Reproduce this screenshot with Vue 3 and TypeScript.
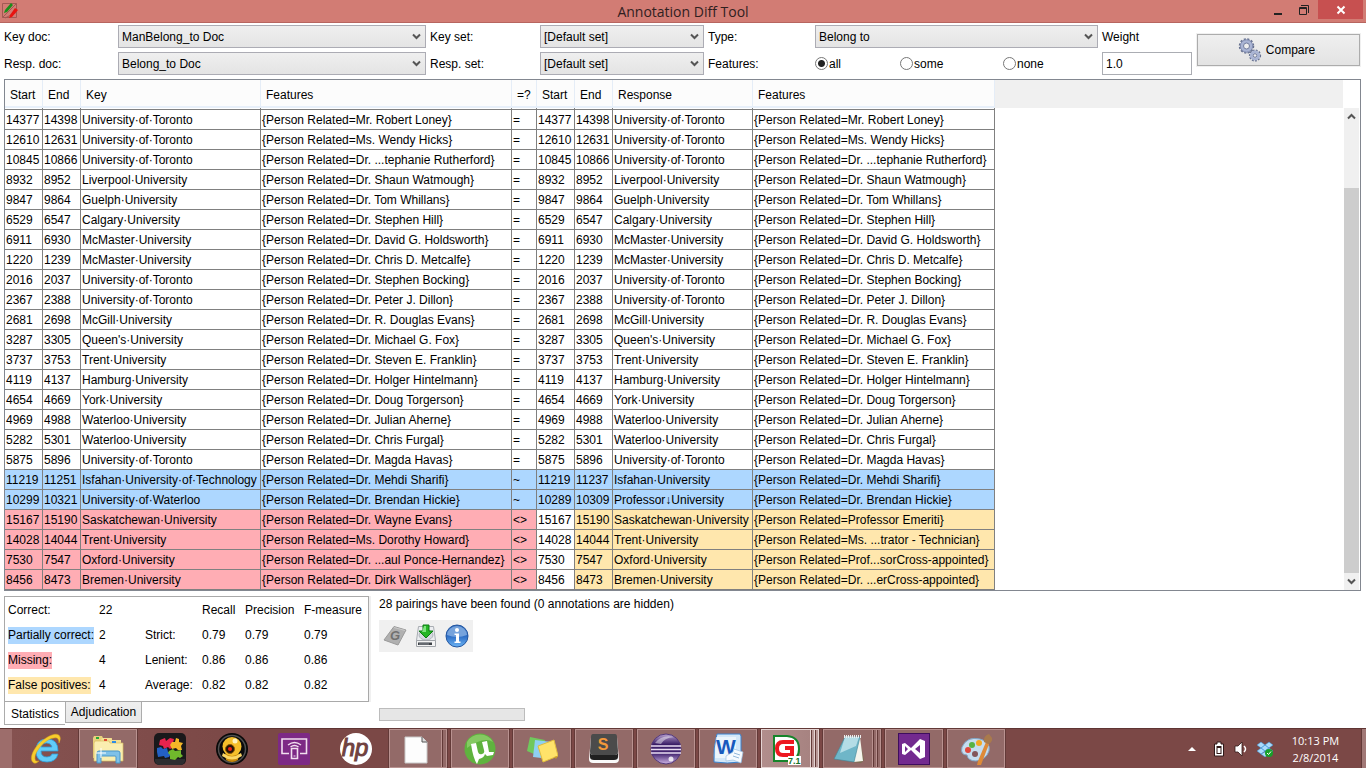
<script setup lang="ts">
import { ref } from 'vue'

type Kind = 'same' | 'partial' | 'wrong'
interface Pairing {
  kind: Kind
  key: [string, string, string, string]
  sign: string
  response: [string, string, string, string]
}

const same = (start: string, end: string, name: string, person: string): Pairing => {
  const cells: [string, string, string, string] = [start, end, name, `{Person Related=${person}}`]
  return { kind: 'same', key: cells, sign: '=', response: cells }
}

const pairings: Pairing[] = [
  same('14377', '14398', 'University·of·Toronto', 'Mr. Robert Loney'),
  same('12610', '12631', 'University·of·Toronto', 'Ms. Wendy Hicks'),
  same('10845', '10866', 'University·of·Toronto', 'Dr. ...tephanie Rutherford'),
  same('8932', '8952', 'Liverpool·University', 'Dr. Shaun Watmough'),
  same('9847', '9864', 'Guelph·University', 'Dr. Tom Whillans'),
  same('6529', '6547', 'Calgary·University', 'Dr. Stephen Hill'),
  same('6911', '6930', 'McMaster·University', 'Dr. David G. Holdsworth'),
  same('1220', '1239', 'McMaster·University', 'Dr. Chris D. Metcalfe'),
  same('2016', '2037', 'University·of·Toronto', 'Dr. Stephen Bocking'),
  same('2367', '2388', 'University·of·Toronto', 'Dr. Peter J. Dillon'),
  same('2681', '2698', 'McGill·University', 'Dr. R. Douglas Evans'),
  same('3287', '3305', "Queen's·University", 'Dr. Michael G. Fox'),
  same('3737', '3753', 'Trent·University', 'Dr. Steven E. Franklin'),
  same('4119', '4137', 'Hamburg·University', 'Dr. Holger Hintelmann'),
  same('4654', '4669', 'York·University', 'Dr. Doug Torgerson'),
  same('4969', '4988', 'Waterloo·University', 'Dr. Julian Aherne'),
  same('5282', '5301', 'Waterloo·University', 'Dr. Chris Furgal'),
  same('5875', '5896', 'University·of·Toronto', 'Dr. Magda Havas'),
  {
    kind: 'partial', sign: '~',
    key: ['11219', '11251', 'Isfahan·University·of·Technology', '{Person Related=Dr. Mehdi Sharifi}'],
    response: ['11219', '11237', 'Isfahan·University', '{Person Related=Dr. Mehdi Sharifi}'],
  },
  {
    kind: 'partial', sign: '~',
    key: ['10299', '10321', 'University·of·Waterloo', '{Person Related=Dr. Brendan Hickie}'],
    response: ['10289', '10309', 'Professor↓University', '{Person Related=Dr. Brendan Hickie}'],
  },
  {
    kind: 'wrong', sign: '<>',
    key: ['15167', '15190', 'Saskatchewan·University', '{Person Related=Dr. Wayne Evans}'],
    response: ['15167', '15190', 'Saskatchewan·University', '{Person Related=Professor Emeriti}'],
  },
  {
    kind: 'wrong', sign: '<>',
    key: ['14028', '14044', 'Trent·University', '{Person Related=Ms. Dorothy Howard}'],
    response: ['14028', '14044', 'Trent·University', '{Person Related=Ms. ...trator - Technician}'],
  },
  {
    kind: 'wrong', sign: '<>',
    key: ['7530', '7547', 'Oxford·University', '{Person Related=Dr. ...aul Ponce-Hernandez}'],
    response: ['7530', '7547', 'Oxford·University', '{Person Related=Prof...sorCross-appointed}'],
  },
  {
    kind: 'wrong', sign: '<>',
    key: ['8456', '8473', 'Bremen·University', '{Person Related=Dr. Dirk Wallschläger}'],
    response: ['8456', '8473', 'Bremen·University', '{Person Related=Dr. ...erCross-appointed}'],
  },
]

const headings = ['Start', 'End', 'Key', 'Features', '=?', 'Start', 'End', 'Response', 'Features']
const featureModes = ['all', 'some', 'none']
const mode = ref('all')
const weight = ref('1.0')

const stats = [
  { label: 'Partially correct:', tone: 'blue', count: '2', row: 'Strict:', value: '0.79' },
  { label: 'Missing:', tone: 'red', count: '4', row: 'Lenient:', value: '0.86' },
  { label: 'False positives:', tone: 'yellow', count: '4', row: 'Average:', value: '0.82' },
]
</script>

<template>
  <div class="screen">
    <header class="titlebar">
      <svg class="app-icon" viewBox="0 0 16 16" width="16" height="16" aria-hidden="true">
        <path d="M.5 .5h14v14H.5zM.5 14.5L14.5 .5M3 15L15 9" fill="none" stroke="#a25a54" />
        <path d="M3 7L9 0l2 2-6 7-3 1z" fill="#1a8f1a" />
        <path d="M8 12l5-7 3 2-6 7-3 1z" fill="#e81410" />
      </svg>
      <h1>Annotation Diff Tool</h1>
      <div class="window-buttons">
        <button type="button" aria-label="Minimize">
          <svg viewBox="0 0 12 12" width="12" height="12"><path d="M2 9h8v2H2z" fill="#222" /></svg>
        </button>
        <button type="button" aria-label="Restore">
          <svg viewBox="0 0 12 12" width="12" height="12"><path d="M1.500 3.500h7v7h-7zM1 4.500h8M3 1.500h7.500V9" fill="none" stroke="#222" /></svg>
        </button>
        <button type="button" class="close" aria-label="Close">
          <svg viewBox="0 0 12 12" width="12" height="12"><path d="M2.500 2.500l7 7M9.500 2.500l-7 7" stroke="#fff" stroke-width="2" /></svg>
        </button>
      </div>
    </header>

    <main>
      <form class="options" @submit.prevent>
        <label for="key-doc">Key doc:</label>
        <div class="combo">
          <select id="key-doc"><option>ManBelong_to Doc</option></select>
          <svg viewBox="0 0 9 7" width="9" height="7"><path d="M1 1.500l3.500 3.500L8 1.500" /></svg>
        </div>
        <label for="key-set">Key set:</label>
        <div class="combo">
          <select id="key-set"><option>[Default set]</option></select>
          <svg viewBox="0 0 9 7" width="9" height="7"><path d="M1 1.500l3.500 3.500L8 1.500" /></svg>
        </div>
        <label for="type">Type:</label>
        <div class="combo">
          <select id="type"><option>Belong to</option></select>
          <svg viewBox="0 0 9 7" width="9" height="7"><path d="M1 1.500l3.500 3.500L8 1.500" /></svg>
        </div>
        <label for="weight">Weight</label>
        <button type="submit" class="compare">
          <svg viewBox="0 0 24 24" width="24" height="24" aria-hidden="true">
            <circle cx="8.500" cy="8" r="6.500" fill="none" stroke="#65708f" stroke-width="2.500" stroke-dasharray="2 1.400" />
            <circle cx="8.500" cy="8" r="4.800" fill="none" stroke="#a9b4d4" stroke-width="3.400" />
            <circle cx="8.500" cy="8" r="6.200" fill="none" stroke="#7783a6" stroke-width=".8" />
            <circle cx="8.500" cy="8" r="3" fill="#eee" stroke="#6f7a9c" />
            <circle cx="17" cy="17.500" r="5" fill="none" stroke="#65708f" stroke-width="2.200" stroke-dasharray="1.700 1.267" />
            <circle cx="17" cy="17.500" r="3.700" fill="none" stroke="#a9b4d4" stroke-width="2.800" />
            <circle cx="17" cy="17.500" r="1.800" fill="#eee" stroke="#6f7a9c" />
          </svg>
          Compare
        </button>
        <label for="resp-doc">Resp. doc:</label>
        <div class="combo">
          <select id="resp-doc"><option>Belong_to Doc</option></select>
          <svg viewBox="0 0 9 7" width="9" height="7"><path d="M1 1.500l3.500 3.500L8 1.500" /></svg>
        </div>
        <label for="resp-set">Resp. set:</label>
        <div class="combo">
          <select id="resp-set"><option>[Default set]</option></select>
          <svg viewBox="0 0 9 7" width="9" height="7"><path d="M1 1.500l3.500 3.500L8 1.500" /></svg>
        </div>
        <span id="features-label">Features:</span>
        <div class="radios" role="radiogroup" aria-labelledby="features-label">
          <label v-for="m in featureModes" :key="m"><input v-model="mode" type="radio" name="mode" :value="m" />{{ m }}</label>
        </div>
        <input id="weight" v-model="weight" type="text" class="weight" />
      </form>

      <section class="results">
        <table class="grid">
          <colgroup>
            <col class="num" /><col class="num" /><col class="key" /><col class="key-features" /><col class="sign" />
            <col class="num" /><col class="num" /><col class="response" /><col class="response-features" /><col />
          </colgroup>
          <thead>
            <tr>
              <th v-for="(h, i) in headings" :key="i" scope="col">{{ h }}</th>
              <td class="rest"></td>
            </tr>
          </thead>
          <tbody>
            <tr class="clipped"><td v-for="n in 9" :key="n"></td><td class="rest"></td></tr>
            <tr v-for="(p, i) in pairings" :key="i" :class="p.kind">
              <td v-for="(c, j) in p.key" :key="'k' + j" class="k">{{ c }}</td>
              <td class="k sign">{{ p.sign }}</td>
              <td v-for="(c, j) in p.response" :key="'r' + j" :class="['r', { first: j === 0 }]">{{ c }}</td>
              <td class="rest"></td>
            </tr>
          </tbody>
        </table>
        <div class="scroll">
          <button type="button" aria-label="Scroll up"><svg viewBox="0 0 9 7" width="9" height="7"><path d="M1 5.500L4.500 2 8 5.500" /></svg></button>
          <div class="track"><div class="thumb"></div></div>
          <button type="button" aria-label="Scroll down"><svg viewBox="0 0 9 7" width="9" height="7"><path d="M1 1.500l3.500 3.500L8 1.500" /></svg></button>
        </div>
      </section>

      <section class="bottom">
        <div class="tabs">
          <div class="stats">
            <table>
              <colgroup><col class="c1" /><col class="c2" /><col class="c3" /><col class="c4" /><col class="c5" /><col /></colgroup>
              <tbody>
                <tr>
                  <td>Correct:</td><td>22</td><td></td><td>Recall</td><td>Precision</td><td>F-measure</td>
                </tr>
                <tr v-for="s in stats" :key="s.label">
                  <td><span :class="s.tone">{{ s.label }}</span></td><td>{{ s.count }}</td><td>{{ s.row }}</td>
                  <td>{{ s.value }}</td><td>{{ s.value }}</td><td>{{ s.value }}</td>
                </tr>
              </tbody>
            </table>
          </div>
          <div class="tab-row" role="tablist">
            <button type="button" role="tab" class="current" aria-selected="true">Statistics</button>
            <button type="button" role="tab" aria-selected="false">Adjudication</button>
          </div>
        </div>
        <div class="status">
          <p>28 pairings have been found (0 annotations are hidden)</p>
          <div class="tools">
            <button type="button" aria-label="Show document">
              <svg viewBox="0 0 24 24" width="24" height="24">
                <path d="M11 2.500L23 6l-8 15L1 16z" fill="#b0b0b0" stroke="#9a9a9a" />
                <path d="M11 3.500L22 6.500" stroke="#c9c9c9" />
                <text x="7" y="16" class="tool-g">G</text>
              </svg>
            </button>
            <button type="button" aria-label="Export to HTML">
              <svg viewBox="0 0 24 24" width="24" height="24">
                <path d="M4.500 2.500h15l2 14H2.500z" fill="#eceef1" stroke="#a9adb3" />
                <ellipse cx="12" cy="11" rx="7" ry="5" fill="#d5d9df" stroke="#b0b5bd" />
                <path d="M2.500 16.500h19v6h-19z" fill="#f4f4f4" stroke="#a0a4a9" />
                <path d="M4 18.500h14v2.500H4z" fill="#3d4146" /><path d="M6 18v3M8 18v3M10 18v3M12 18v3M14 18v3" stroke="#8f949a" />
                <path d="M9 1h6v6h4l-7 7-7-7h4z" fill="#24b524" stroke="#0a7d12" />
                <path d="M10 2h2v6h-4" fill="#7de47d" />
              </svg>
            </button>
            <button type="button" aria-label="Help">
              <svg viewBox="0 0 24 24" width="24" height="24">
                <defs><linearGradient id="info" x2="0" y2="1"><stop offset="0" stop-color="#2f6bbd" /><stop offset=".5" stop-color="#2c6cc4" /><stop offset="1" stop-color="#6db5f5" /></linearGradient></defs>
                <circle cx="12" cy="12" r="11" fill="url(#info)" stroke="#2456a0" />
                <path d="M2 11a10 9 0 0 1 20 0q-10 4-20 0z" fill="#a7c8ee" opacity=".6" />
                <circle cx="12" cy="6" r="2" fill="#fff" /><path d="M9.500 9.500h4.500v8h1.500v1.500h-6v-1.500H11v-6.500H9.500z" fill="#fff" />
              </svg>
            </button>
          </div>
          <div class="progress" role="progressbar" aria-label="Progress"></div>
        </div>
      </section>
    </main>

    <footer class="taskbar">
      <nav aria-label="Taskbar">
        <button type="button" aria-label="Internet Explorer">
          <svg viewBox="0 0 32 32" width="32" height="32">
            <path d="M28 18H11q0 6 6 6 4 0 5-3h6q-2 8-11 8-11 0-11-11Q6 6 17 6q11 0 11 12zM11 14h11q-1-4-5.500-4T11 14z" fill="#62cdf8" stroke="#2f9fdc" stroke-width=".8" />
            <path d="M4 30C-2 27 3 15 12 8 20 1 29-1 30 4q1 2-1 6 0-6-5-5C17 5 4 18 5 26q0 3 4 2-3 3-5 2z" fill="#f8cd2c" stroke="#d9a21a" stroke-width=".5" />
          </svg>
        </button>
        <button type="button" class="open" aria-label="File Explorer">
          <svg viewBox="0 0 32 32" width="32" height="32">
            <path d="M1 5l1-2h8l1 2h9v20H1z" fill="#e8d17c" /><path d="M9 7l1-2h9l1 2h9v20H9z" fill="#f2df94" />
            <path d="M2 10l1-2h14l1 2h13v18H2z" fill="#faeeb0" stroke="#d8bd62" stroke-width=".7" />
            <path d="M4 4h3v2H4z" fill="#25a838" /><path d="M12 6h3v2h-3z" fill="#df4a2e" /><path d="M20 8h4v2h-4z" fill="#2f8de4" />
            <path d="M5 30V20q0-2 2-2h19q2 0 2 2v10h-4v-6q0-1-1-1H10q-1 0-1 1v6z" fill="#7fc1e8" stroke="#4a96c8" />
            <path d="M9 15v10M4 20h10" stroke="#fff" />
          </svg>
        </button>
        <button type="button" aria-label="Puzzle">
          <svg viewBox="0 0 32 32" width="32" height="32">
            <rect width="32" height="32" rx="5" fill="#19191b" /><path d="M1 26h30v2q-1 4-5 4H6q-4 0-5-4z" fill="#2d2d30" />
            <path d="M6 7l5-2 1 3 4-3 4 1-1 4 2 3-5 3-2-2-4 2-1-3-4-1z" fill="#e8234e" />
            <path d="M18 9l3 0 1-4 3 1 0 3 4 1-2 3 1 4-4 0-2-2-4 1-2-4z" fill="#f5b727" />
            <path d="M3 15l4-1 2 2 4-1 1 4 3 2-2 3-4 1-1-2-6 1-1-5z" fill="#2360c4" />
            <path d="M15 18l4-2 2 2 6-1 0 4 2 2-3 2-2-1-3 3-5-1 0-4-2-2z" fill="#70b82c" />
          </svg>
        </button>
        <button type="button" aria-label="Webcam">
          <svg viewBox="0 0 32 32" width="32" height="32">
            <circle cx="16" cy="16" r="16" fill="#0a0a0a" /><circle cx="16" cy="16" r="13.500" fill="none" stroke="#505050" stroke-width="1.500" />
            <path d="M9 21l1 6q6 4 12 0l1-6z" fill="#c98a0c" /><circle cx="16" cy="13.500" r="9.500" fill="#f5bf2b" /><path d="M7 20q9 7 18 0l1 3q-10 7-20 0z" fill="#fbd765" />
            <circle cx="14" cy="16" r="4.500" fill="#241408" stroke="#8d5806" /><circle cx="14" cy="16" r="2" fill="#ee2013" /><circle cx="19" cy="8" r="2.500" fill="#fff3bd" />
          </svg>
        </button>
        <button type="button" aria-label="Cast">
          <svg viewBox="0 0 32 32" width="32" height="32">
            <rect width="32" height="32" rx="2" fill="#7d2985" />
            <path d="M11 20.500H4V6h24.500v14.500H22M13.500 15.500h6v10h-6z" fill="none" stroke="#f1deef" stroke-width="1.600" />
            <path d="M10 12q6.500-5 13 0M12.500 14q4-3 8 0" fill="none" stroke="#f1deef" stroke-width="1.400" /><path d="M15.500 23h2" stroke="#f1deef" />
          </svg>
        </button>
        <button type="button" aria-label="HP">
          <svg viewBox="0 0 32 32" width="32" height="32">
            <circle cx="16" cy="16" r="16" fill="#fff" /><text x="15" y="23" text-anchor="middle" class="hp">hp</text>
          </svg>
        </button>
        <button type="button" class="open stack" aria-label="Document">
          <svg viewBox="0 0 32 32" width="32" height="32"><path d="M5 4h17l5 5v21H5z" fill="#fdfdfd" stroke="#c9c9c9" /><path d="M22 4v5h5" fill="#ddd" stroke="#555" /></svg>
        </button>
        <button type="button" class="open" aria-label="uTorrent">
          <svg viewBox="0 0 32 32" width="32" height="32">
            <circle cx="16" cy="16" r="15.500" fill="#5fb33e" /><path d="M3 9a15 15 0 0 1 26 0Q20 3 3 15z" fill="#85ca62" />
            <path d="M7 11l5-1 2 9q1 3 4 2 3-1 2-4L18 9l5-1 2 11 5 0-1 3-6 1-2-2q-1 4-6 5l-2 5q-4-6-6-20z" fill="#fff" />
          </svg>
        </button>
        <button type="button" class="open" aria-label="Sticky Notes">
          <svg viewBox="0 0 32 32" width="32" height="32">
            <path d="M4 4l15 3-4 17L1 18z" fill="#70c85c" /><path d="M9 7l17 2-2 17-17-2z" fill="#8fd0f2" />
            <path d="M12 13l16-6 4 16-15 6z" fill="#ffe36a" stroke="#e1bd3d" /><path d="M28 24l4-1-2 3z" fill="#c59a2a" />
          </svg>
        </button>
        <button type="button" class="open" aria-label="Sublime Text">
          <svg viewBox="0 0 32 32" width="32" height="32">
            <path d="M3 4h26l2 22q0 4-4 4H5q-4 0-4-4z" fill="#fafafa" /><path d="M5 1h22q2 0 2 3l1 14q0 4-3 4H5q-3 0-3-4L3 4q0-3 2-3z" fill="#4b4b4b" /><path d="M2 18v6q0 3 4 3h20q4 0 4-3v-6q0 4-3 4H5q-3 0-3-4z" fill="#202020" />
            <text x="15" y="17" text-anchor="middle" class="sublime">S</text>
          </svg>
        </button>
        <button type="button" class="open" aria-label="Eclipse">
          <svg viewBox="0 0 32 32" width="32" height="32">
            <defs><linearGradient id="ecl" x2="0" y2="1"><stop offset="0" stop-color="#b9a2d0" /><stop offset=".35" stop-color="#3a1d66" /><stop offset=".65" stop-color="#432570" /><stop offset="1" stop-color="#cfb5e6" /></linearGradient></defs>
            <circle cx="16" cy="16" r="15" fill="url(#ecl)" stroke="#53387a" /><path d="M1 13h30M1 16.500h30M1 20h30" stroke="#e9ddf2" stroke-width="1.500" /><path d="M5 10q7-9 19-6-10 1-13 7z" fill="#fff" opacity=".45" /><circle cx="21" cy="26" r="2.500" fill="#fff" opacity=".8" />
          </svg>
        </button>
        <button type="button" class="open" aria-label="Word">
          <svg viewBox="0 0 32 32" width="32" height="32">
            <path d="M5 1h23l1 2v26q-14 2-27 0Q1 15 5 1z" fill="#d3e8f9" stroke="#3a82cf" /><path d="M4 4h20v21H3z" fill="#fff" opacity=".55" />
            <text x="14" y="21" text-anchor="middle" class="word">W</text><path d="M14 23l7-4 1-3 9 3-2 11-8-3-7 1z" fill="#f7fbff" stroke="#9ec2e2" stroke-width=".7" /><path d="M22 20l6 2M21 23l6 2" stroke="#95b9da" />
          </svg>
        </button>
        <button type="button" class="open active stack two" aria-label="GATE">
          <svg viewBox="0 0 32 32" width="32" height="32">
            <path d="M3 3h13q12 1 12 13 0 11-10 12H3z" fill="#fff" stroke="#16852b" stroke-width="2" />
            <path d="M23 9H12q-6 0-6 6.500T12 22h9v-7h-7" fill="none" stroke="#ed1820" stroke-width="4" />
            <path d="M17 23h13v9H17z" fill="#fff" /><text x="17" y="31" class="version">7.1</text>
          </svg>
        </button>
        <button type="button" class="open stack two" aria-label="Notepad">
          <svg viewBox="0 0 32 32" width="32" height="32">
            <path d="M26 4l5 23-3 3-9-1z" fill="#7a6f52" /><path d="M12 3l15 1 3 24-9 1z" fill="#f5f5ed" />
            <path d="M12 4h15l-6 25-20-3z" fill="#6fb6c8" stroke="#3f8496" stroke-width=".6" /><path d="M12 4h14l-3 9-16 7z" fill="#cbeaf0" opacity=".75" /><path d="M11 3.500h17" stroke="#eee" stroke-width="3" stroke-dasharray="1 1" />
          </svg>
        </button>
        <button type="button" class="open" aria-label="Visual Studio">
          <svg viewBox="0 0 32 32" width="32" height="32">
            <rect x=".5" y=".5" width="31" height="31" fill="#732a8f" stroke="#3e0d5d" />
            <path d="M4 11l3-1 6 5 9-9 5 2v16l-5 2-9-9-6 5-3-1zM7 13v6l3-3zM22 12l-5 4 5 4z" fill="#fff" fill-rule="evenodd" />
          </svg>
        </button>
        <button type="button" class="open" aria-label="Paint">
          <svg viewBox="0 0 32 32" width="32" height="32">
            <path d="M2 14Q7 3 20 6q11 3 9 12-3 9-13 10-8 0-9-6-7 0-5-8z" fill="#c5ddf0" stroke="#7fa5c5" /><circle cx="15" cy="21" r="3" fill="#82565a" />
            <circle cx="8" cy="17" r="3" fill="#e0483c" /><circle cx="12" cy="12" r="3" fill="#57b344" /><circle cx="19" cy="10" r="3" fill="#f2a825" />
            <path d="M26 9l3 2-8 21-4 0 1-4z" fill="#dd8a38" /><path d="M24 9q-1-6 5-8l3 4q1 4-4 6z" fill="#a97a4c" />
          </svg>
        </button>
      </nav>
      <div class="tray">
        <svg viewBox="0 0 8 6" width="8" height="6" aria-hidden="true"><path d="M0 5l4-4 4 4z" fill="#fff" /></svg>
        <svg viewBox="0 0 12 16" width="12" height="16" aria-hidden="true"><path d="M4 1h4v2h2.500v12h-9V3H4z" fill="#fff" stroke="#301918" /><path d="M3.500 5h5v8h-5z" fill="#301918" /><path d="M4.500 7h3v5h-3z" fill="#fff" /></svg>
        <svg viewBox="0 0 14 16" width="14" height="16" aria-hidden="true"><path d="M1 5h3l4-4v14l-4-4H1z" fill="#fff" stroke="#301918" stroke-width=".8" /><path d="M10 5q3 3 0 6" fill="none" stroke="#fff" stroke-width="1.500" /></svg>
        <svg viewBox="0 0 16 16" width="16" height="16" aria-hidden="true"><path d="M4 1l4 3-4 3-4-3zM12 1l4 3-4 3-4-3zM4 7l4 3-4 3-4-3zM12 7l4 3-4 3-4-3zM8 4l4 3-4 3-4-3zM4 13l4-2 4 2-4 3z" fill="#a9dbfb" stroke="#3b91d4" stroke-width=".5" /><circle cx="12" cy="12" r="4" fill="#17a02a" /><path d="M10 12l1.500 1.500L14 10.500" fill="none" stroke="#fff" /></svg>
        <time datetime="2014-02-08T22:13"><span>10:13 PM</span><span>2/8/2014</span></time>
      </div>
      <button type="button" class="desktop" aria-label="Show desktop"></button>
    </footer>
  </div>
</template>

<style>
body { margin: 0; background: #fff; }
</style>

<style scoped>
.screen { min-height: 100vh; display: flex; flex-direction: column; font-family: "Liberation Sans", Arial, sans-serif; font-size: 12px; line-height: 16px; color: #000; }
.screen * { box-sizing: border-box; }
button, select, input { font: inherit; color: inherit; margin: 0; }
button { padding: 0; border: 0; background: none; }
svg { display: block; flex: none; }

.titlebar { display: grid; grid-template-columns: 1fr auto 1fr; height: 23px; background: #d27c74; border-bottom: 1px solid #b7655f; }
.app-icon { margin: 3px 2px; }
h1 { margin: 0; font: 14px/23px "Open Sans", "Noto Sans", sans-serif; color: #30201f; white-space: nowrap; }
.window-buttons { display: flex; justify-content: flex-end; align-items: flex-start; padding-right: 3px; }
.window-buttons button { width: 26px; height: 19px; display: flex; justify-content: center; align-items: center; }
.window-buttons .close { width: 45px; background: #c75050; margin-left: 1px; }

main { flex: 1; display: flex; flex-direction: column; padding: 0 5px 3px 4px; }
.options { display: grid; grid-template-columns: 110px 308fr 106px 164fr 103px 283fr 90px 165px; grid-template-rows: 23px 23px; column-gap: 4px; row-gap: 4px; padding: 2px 0 4px; align-items: center; white-space: nowrap; }
.combo { display: grid; align-items: center; }
.combo select { grid-area: 1 / 1; appearance: none; width: 100%; height: 23px; padding: 0 3px; border: 1px solid #acacb4; border-radius: 0; background: linear-gradient(#efefef, #e4e4e4); }
.combo svg { grid-area: 1 / 1; justify-self: end; margin-right: 5px; pointer-events: none; }
.combo path, .scroll path { fill: none; stroke: #555; stroke-width: 2; }
.compare { grid-column: 8; grid-row: 1 / 3; height: 32px; margin: 0 1px; border: 1px solid #acacac; background: linear-gradient(#efefef, #e3e3e3); box-shadow: 0 0 0 1px #f0f0f0; display: flex; align-items: center; justify-content: center; gap: 4px; padding-right: 4px; }
.radios { display: grid; grid-template-columns: 85fr 103fr 95fr; }
.radios label { display: flex; align-items: center; gap: 1px; }
.radios input { appearance: none; width: 13px; height: 13px; border: 1px solid #777; border-radius: 50%; background: #fff; }
.radios input:checked { background: radial-gradient(circle, #222 0 3px, #fff 4px); }
.weight { height: 23px; width: 100%; border: 1px solid #abadb3; border-radius: 0; padding: 0 3px; background: #fff; }

.results { display: flex; border: 1px solid #828790; }
.grid { flex: 1; table-layout: fixed; border-collapse: separate; border-spacing: 0; width: 100%; }
col.num { width: 38px; }
col.key { width: 180px; }
col.key-features { width: 251px; }
col.sign { width: 25px; }
col.response { width: 140px; }
col.response-features { width: 242px; }
.grid th { height: 28px; padding: 3px 0 0 5px; text-align: left; font-weight: 400; background: #fcfcfc; border-right: 1px solid #e5edf7; border-bottom: 2px solid #e8f0fa; }
.grid thead .rest { background: #f0f0f0; }
.grid td { height: 20px; padding: 0 0 0 1px; white-space: nowrap; border-right: 1px solid #808080; border-bottom: 1px solid #808080; }
.grid td.rest { border: 0; }
.grid .clipped td { height: 2px; padding: 0; }
.partial .k, .partial .r, .blue { background: #add7ff; }
.wrong .k, .red { background: #ffadb4; }
.wrong .r:not(.first), .yellow { background: #ffe7ad; }

.scroll { width: 17px; display: flex; flex-direction: column; padding: 28px 1px 0 1px; background: #f0f0f0; background-clip: content-box; }
.scroll button { height: 17px; display: flex; align-items: center; justify-content: center; }
.track { flex: 1; padding-top: 63px; display: flex; }
.thumb { flex: 1; background: #cdcdcd; }

.bottom { display: flex; gap: 8px; padding-top: 5px; }
.tabs { width: 367px; }
.stats { height: 106px; margin-right: 2px; border: 1px solid #a9a9a9; box-shadow: 2px 0 0 #f0f0f0; }
.stats table { width: 100%; table-layout: fixed; border-spacing: 0; }
.c1 { width: 94px; }
.c2 { width: 46px; }
.c3 { width: 57px; }
.c4 { width: 43px; }
.c5 { width: 59px; }
.stats td { height: 25px; padding: 0; white-space: nowrap; }
.stats td:first-child { padding-left: 3px; }
.stats span { padding: 1px 0 2px; }
.tab-row { display: flex; align-items: flex-start; }
.tab-row button { width: 77px; height: 21px; border: 1px solid #acacac; border-top: 0; background: linear-gradient(#efefef, #e8e8e8); }
.tab-row .current { width: 61px; height: 23px; padding-top: 1px; background: #fff; border-right: 0; }
.status { display: flex; flex-direction: column; align-items: flex-start; }
.status p { margin: 0 0 8px; }
.tools { display: flex; gap: 7px; padding: 4px; background: #f0f0f0; }
.tool-g { font: italic bold 13px "Liberation Sans", Arial, sans-serif; fill: #707070; }
.progress { width: 146px; height: 13px; margin-top: auto; margin-bottom: 4px; border: 1px solid #bcbcbc; background: #e6e6e6; }

.taskbar { display: flex; height: 40px; border-top: 1px solid #5f3533; background: linear-gradient(90deg, #9d6d6b 0 12px, #855250 12px, #7b4846 240px, #7b4846); }
nav { display: flex; flex: 1; padding-left: 15px; }
nav button { width: 58px; height: 39px; margin: 0 2px; display: flex; align-items: center; justify-content: center; border: 1px solid transparent; }
nav .open { border-color: #b99290; background: #936a68; outline: 1px solid #633a38; outline-offset: 0; }
nav .active { background: linear-gradient(90deg, #c3a3a2, #a78381); border-color: #e5d4d3; }
nav .stack { padding-right: 4px; background: linear-gradient(90deg, #936a68 0 51px, #b99290 51px 52px, #633a38 52px 53px, #936a68 53px); }
nav .two { padding-right: 7px; background: linear-gradient(90deg, #936a68 0 48px, #b99290 48px 49px, #633a38 49px 50px, #936a68 50px 52px, #b99290 52px 53px, #633a38 53px 54px, #936a68 54px); }
nav .active.two { background: linear-gradient(90deg, #b18e8c 0, #a78381 48px, #e5d4d3 48px 49px, #633a38 49px 50px, #b79796 50px 52px, #e5d4d3 52px 53px, #633a38 53px 54px, #b79796 54px); }
.hp { font: italic 24px "Liberation Sans", Arial, sans-serif; fill: #704240; stroke: #704240; stroke-width: 1px; }
.sublime { font: bold 16px "Liberation Sans", Arial, sans-serif; fill: #f4983a; }
.word { font: bold 21px "Liberation Sans", Arial, sans-serif; fill: #185abd; }
.version { font: bold 9px "Liberation Sans", Arial, sans-serif; fill: #16712b; }
.tray { display: flex; align-items: center; color: #fff; }
.tray svg { margin-right: 9px; }
.tray svg:first-child { margin-right: 17px; }
time { width: 67px; margin-right: 12px; text-align: center; font: 11px/17px "Open Sans", "Noto Sans", sans-serif; }
time span { display: block; }
.desktop { width: 5px; background: #a17876; border-left: 1px solid #633a38; }
</style>
